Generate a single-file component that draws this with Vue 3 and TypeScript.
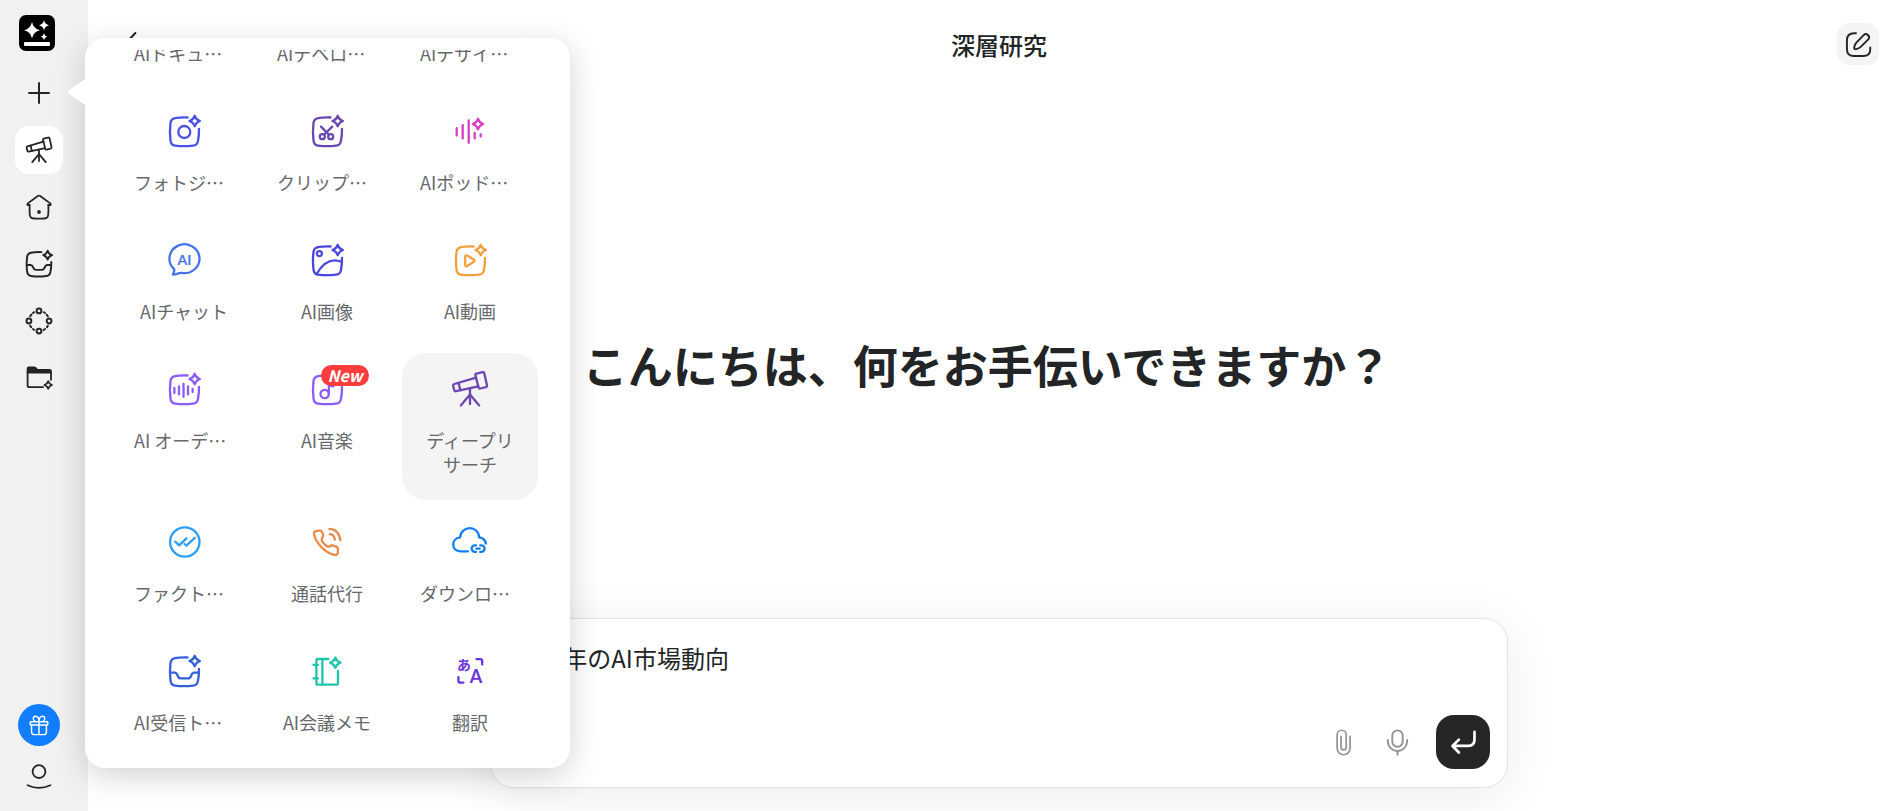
<script setup lang="ts">
import { ref } from 'vue'

interface Shape {
  d: string
  fill?: boolean
}

interface Glyph {
  text: string
  x: number
  y: number
  size: number
}

interface Tool {
  label: string
  color?: string
  shapes?: Shape[]
  glyphs?: Glyph[]
  clipped?: boolean
  badge?: string
  active?: boolean
}

const frame =
  'M21.5 4.5C17 4.4 12 4.6 9 5.2C6 5.8 4.9 7 4.5 10C3.8 16 3.8 22 4.5 27.6C4.9 30.8 6 32.2 9 32.6C15 33.4 21 33.4 27 32.6C30.2 32.2 31.6 31 32 27.8C32.8 24 33 20 33 16'

function circle(cx: number, cy: number, r: number): string {
  return `M${cx - r} ${cy}a${r} ${r} 0 1 0 ${2 * r} 0a${r} ${r} 0 1 0 ${-2 * r} 0`
}

function sparkle(cx: number, cy: number, r = 5.2): string {
  const k = r * 0.24
  return `M${cx} ${cy - r}Q${cx + k} ${cy - k} ${cx + r} ${cy}Q${cx + k} ${cy + k} ${cx} ${cy + r}Q${cx - k} ${cy + k} ${cx - r} ${cy}Q${cx - k} ${cy - k} ${cx} ${cy - r}Z`
}

function strokes(...paths: string[]): Shape[] {
  return paths.map((d) => ({ d }))
}

const corner = sparkle(28.7, 8)

const inboxShapes = strokes(
  frame,
  corner,
  'M4.2 19.7H8.6C12.6 19.7 10.6 25.4 14.6 25.4H22.2C26.2 25.4 24.2 19.7 28.2 19.7H32.6',
)

const telescopeShapes = strokes(
  'M24.4 2.6L30.6 1.1Q32 .8 32.3 2.2L35 14.2Q35.3 15.7 33.9 16.1L28.3 17.5Q26.9 17.8 26.5 16.4L23.5 4.5Q23.1 3 24.4 2.6Z',
  'M24 6.6L2.4 13Q.9 13.5 1.2 14.9L2.2 19Q2.6 20.6 4.1 20.2L26.4 15.4',
  'M6.6 12.2L8.4 19.2',
  'M18 17.4V33',
  'M18 23.6L8.8 34.4',
  'M18 23.6L27.2 34.4',
)

const tools: Tool[] = [
  { label: 'AIドキュ…', clipped: true },
  { label: 'AIデベロ…', clipped: true },
  { label: 'AIデザイ…', clipped: true },
  {
    label: 'フォトジ…',
    clipped: true,
    color: '#4b50e6',
    shapes: strokes(frame, corner, circle(18.3, 19, 6)),
  },
  {
    label: 'クリップ…',
    clipped: true,
    color: '#6b47b2',
    shapes: strokes(
      frame,
      corner,
      'M12 13.6L20 21.8',
      'M23.2 13.6L15 21.8',
      circle(13.3, 23.7, 2.5),
      circle(21.7, 23.7, 2.5),
    ),
  },
  {
    label: 'AIポッド…',
    clipped: true,
    color: '#d63fc4',
    shapes: strokes(
      'M4.7 15.2V22.6',
      'M10.7 12.2V25.4',
      'M16.7 7.4V29.8',
      'M22.7 20V25.4',
      'M28.7 21.4V23.6',
      sparkle(26, 11),
    ),
  },
  {
    label: 'AIチャット',
    color: '#4673e8',
    shapes: strokes(
      'M8.2 27.2A15 14.4 0 1 1 15.4 30.8C12.6 30.6 10.6 32.8 7 32.6C6.6 32.6 8.8 29.4 8.2 27.2Z',
    ),
    glyphs: [{ text: 'AI', x: 18.4, y: 22.6, size: 14 }],
  },
  {
    label: 'AI画像',
    color: '#4b46e0',
    shapes: strokes(frame, corner, circle(10.4, 11.7, 2.5), 'M7.6 32C13.6 21.6 21.4 15.4 32.4 19.8'),
  },
  {
    label: 'AI動画',
    color: '#f2a03d',
    shapes: strokes(frame, corner, 'M13.2 15.2Q13.2 12.4 15.6 13.8L21.6 17.4Q23.4 18.7 21.6 20L15.6 23.8Q13.2 25.2 13.2 22.4Z'),
  },
  {
    label: 'AI オーデ…',
    clipped: true,
    color: '#8c5cf6',
    shapes: strokes(
      frame,
      corner,
      'M8.4 17V22',
      'M13 15.4V23.4',
      'M17.5 13V25.8',
      'M22 15.4V23.4',
      'M26.6 18V21',
    ),
  },
  {
    label: 'AI音楽',
    color: '#8c5cf6',
    badge: 'New',
    shapes: strokes(frame, circle(15.7, 23, 4.2), 'M19.9 23V11.6Q20.4 15.4 24.4 15.4'),
  },
  { label: 'ディープリサーチ', active: true, color: '#6b47b2', shapes: telescopeShapes },
  {
    label: 'ファクト…',
    clipped: true,
    color: '#2e9ff7',
    shapes: strokes(circle(18.8, 18, 14.7), 'M9.2 17.6L13.2 21.4L20.4 14.4', 'M18.6 20L20.4 21.6L28.8 13.8'),
  },
  {
    label: '通話代行',
    color: '#e88a48',
    shapes: strokes(
      'M7 7.1C8.4 6.4 10 6.6 11.4 6.7C12.4 6.8 12.9 7.6 13.3 8.6L14.2 11.2C14.7 12.7 12.4 14 12.6 15.7C13 18.2 16.6 21.8 19 22.6C20.8 23.2 21.8 20.9 23.4 21.3L27.4 22.6C28.6 23 28.9 24 28.9 25.2V28.4C28.9 30 27.6 31.2 26 31C16 29 6.4 18.6 5 9.6C4.8 8.4 5.8 7.6 7 7.1Z',
      'M20.4 4.9C26.6 5 31 9.8 31.3 16.2',
      'M20.8 10.1C23.8 10.4 25.6 12.6 25.8 15.6',
    ),
  },
  {
    label: 'ダウンロ…',
    clipped: true,
    color: '#117ef5',
    shapes: strokes(
      'M16 27.3H8.4C-1 27.3 -1.2 14.4 8.1 13.4C9.4 .8 26.4 1.2 27.2 13.4C31 14 33.2 16.2 33.9 19.4',
      'M24 21.3H22.9A3.3 3.3 0 0 0 22.9 27.9H24',
      'M28.2 21.3H29.3A3.3 3.3 0 0 1 29.3 27.9H28.2',
      'M24.4 24.6H27.8',
    ),
  },
  { label: 'AI受信ト…', clipped: true, color: '#3661d8', shapes: inboxShapes },
  {
    label: 'AI会議メモ',
    color: '#20c4ac',
    shapes: strokes(
      'M19.4 6H8.8Q7.4 6 7.4 7.4V30.2Q7.4 31.6 8.8 31.6H27.6Q29 31.6 29 30.2V18',
      'M13.4 6V31.6',
      'M4.4 11.8H9',
      'M4.4 25.4H9',
      sparkle(26.3, 9.7),
    ),
  },
  {
    label: '翻訳',
    color: '#6a35d8',
    shapes: strokes('M24.6 6.2H28.2Q30.2 6.2 30.2 8.2V11.6', 'M6.4 24.2V27.4Q6.4 29.6 8.6 29.6H11.4'),
    glyphs: [
      { text: 'あ', x: 12, y: 17, size: 14 },
      { text: 'A', x: 24, y: 30.4, size: 18 },
    ],
  },
]

interface NavItem {
  name: string
  box: string
  width: number
  shapes: Shape[]
  active?: boolean
}

const nav: NavItem[] = [
  { name: '追加', box: '0 0 28 28', width: 2, shapes: strokes('M14 4V24', 'M4 14H24') },
  { name: 'ディープリサーチ', box: '-1 -1 38 38', width: 2.4, shapes: telescopeShapes, active: true },
  {
    name: 'ホーム',
    box: '0 0 28 28',
    width: 1.8,
    shapes: [
      { d: 'M4.6 11.8L2.6 12.2Q1.8 11.4 2.8 10.4L12.8 3Q14 2.2 15.2 3L25.2 10.4Q26.2 11.4 25.4 12.2L23.4 11.8' },
      { d: 'M4.6 11.8V19C4.6 23.6 5.4 25.3 9 25.5Q14 25.9 19 25.5C22.6 25.3 23.4 23.6 23.4 19V11.8' },
      { d: circle(14, 19, 1), fill: true },
    ],
  },
  { name: '受信トレイ', box: '2 2 33 33', width: 2.3, shapes: inboxShapes },
  {
    name: 'エージェント',
    box: '0 0 28 28',
    width: 2,
    shapes: strokes(
      circle(14, 3.9, 2.4),
      circle(24.1, 14, 2.4),
      circle(14, 24.1, 2.4),
      circle(3.9, 14, 2.4),
      'M19 5.2L20 6M21.8 7.7L22.8 9.2',
      'M22.8 18.8L22 20.2M20 22L18.6 23',
      'M9 22.8L8 22M6.2 20.2L5.2 18.8',
      'M5.2 9.2L6.4 7.6M8 6L9.2 5.2',
    ),
  },
  {
    name: 'ファイル',
    box: '0 0 28 28',
    width: 1.8,
    shapes: [
      { d: 'M2.6 8.6V4.6Q2.6 3.4 4 3.4H9.2Q10.4 3.4 11.2 4.6Q11.8 5.8 13 5.8H24.6Q26 5.8 26 7.2V8.6Z', fill: true },
      { d: 'M2.6 8V21.4Q2.6 23.2 4.4 23.2H18' },
      { d: 'M26 8V15.8' },
      { d: sparkle(23.2, 21, 3.8) },
    ],
  },
]

const prompt = ref('2025年のAI市場動向')
</script>

<template>
  <div class="shell">
    <nav class="rail">
      <svg class="logo" viewBox="0 0 36 36" aria-hidden="true">
        <rect width="36" height="36" rx="7" />
        <path
          fill="#fff"
          d="M13 7Q14.4 13.8 21 15.2Q14.4 16.6 13 23.4Q11.6 16.6 5 15.2Q11.6 13.8 13 7ZM25 5Q25.8 9.2 30 10.2Q25.8 11.2 25 15.4Q24.2 11.2 20 10.2Q24.2 9.2 25 5ZM25 18.2Q25.6 21 28.4 21.6Q25.6 22.2 25 25Q24.4 22.2 21.6 21.6Q24.4 21 25 18.2Z"
        />
        <rect x="5" y="27" width="26" height="4" rx="1" fill="#fff" />
      </svg>
      <div class="rail-items">
        <button
          v-for="item in nav"
          :key="item.name"
          type="button"
          class="rail-button"
          :class="{ active: item.active }"
          :aria-label="item.name"
        >
          <svg class="line-icon rail-icon" :viewBox="item.box" :stroke-width="item.width">
            <path v-for="(s, i) in item.shapes" :key="i" :d="s.d" :fill="s.fill ? 'currentColor' : 'none'" />
          </svg>
        </button>
      </div>
      <div class="rail-bottom">
        <button type="button" class="gift" aria-label="ギフト">
          <svg class="line-icon gift-icon" viewBox="0 0 22 24" stroke-width="1.6">
            <path d="M2 8.4H20Q20.6 8.4 20.6 9V11.4Q20.6 12 20 12H2Q1.4 12 1.4 11.4V9Q1.4 8.4 2 8.4Z" />
            <path d="M2.8 12V19.4Q2.8 22.6 6 22.6H16Q19.2 22.6 19.2 19.4V12M11 8.4V22.6" />
            <path d="M11 8C11 4.6 9.6 2.4 7.2 2.4C4 2.4 4 6.6 6.4 7.8M11 8C11 4.6 12.4 2.4 14.8 2.4C18 2.4 18 6.6 15.6 7.8" />
          </svg>
        </button>
        <button type="button" class="account" aria-label="アカウント">
          <svg class="line-icon rail-icon" viewBox="0 0 28 28" stroke-width="1.8">
            <circle cx="14" cy="9.6" r="6.4" />
            <path d="M2.6 23.2Q14 28.4 25.4 23.2" />
          </svg>
        </button>
      </div>
    </nav>

    <main class="main">
      <header class="topbar">
        <button type="button" class="back" aria-label="戻る">
          <svg class="line-icon back-icon" viewBox="0 0 24 28" stroke-width="2"><path d="M16.4 3L6 14L16.4 25" /></svg>
        </button>
        <h1 class="title">深層研究</h1>
        <button type="button" class="edit" aria-label="新規作成">
          <svg class="line-icon edit-icon" viewBox="0 0 28 28" stroke-width="2">
            <path d="M11.4 2.4H9.4Q2 2.4 2 9.8V18.6Q2 26 9.4 26H18.8Q26.2 26 26.2 18.6V17" />
            <path d="M19.6 4C21.8 1.8 26.4 4.8 24.6 8.2L16.6 16.2C14.4 18.2 11.8 19 10.2 18.8C8.8 18.4 9.8 14.2 12 11.8Z" />
          </svg>
        </button>
      </header>

      <section class="hero">
        <h2 class="greeting">こんにちは、何をお手伝いできますか？</h2>
      </section>

      <form class="composer" @submit.prevent>
        <textarea v-model="prompt" class="prompt" rows="1" aria-label="メッセージ"></textarea>
        <div class="actions">
          <button type="button" class="ghost" aria-label="添付">
            <svg class="line-icon action-icon" viewBox="0 0 28 28" stroke-width="1.8">
              <path d="M20.8 7.6V20A6.6 6.6 0 0 1 7.4 20V6A4.6 4.6 0 0 1 16.8 6V19A2.7 2.7 0 0 1 11.4 19V7.6" />
            </svg>
          </button>
          <button type="button" class="ghost" aria-label="音声入力">
            <svg class="line-icon action-icon" viewBox="0 0 28 28" stroke-width="2">
              <rect x="8.6" y="1.4" width="10.8" height="17" rx="5.4" />
              <path d="M4 11.4V12.8A10 10 0 0 0 24 12.8V11.4M14 22.8V26.8" />
            </svg>
          </button>
          <button type="submit" class="send" aria-label="送信">
            <svg class="line-icon action-icon" viewBox="0 0 28 28" stroke-width="2.8">
              <path d="M25.4 3V11Q25.4 17.6 18.8 17.6H3M9.2 11L2.6 17.6L9.2 24.4" />
            </svg>
          </button>
        </div>
      </form>
    </main>

    <aside class="popover">
      <svg class="pointer" viewBox="0 0 18 26" aria-hidden="true"><path fill="#fff" d="M18 0V26L1 14Q0 13 1 12Z" /></svg>
      <div class="scroller">
        <div class="grid">
          <button v-for="tool in tools" :key="tool.label" type="button" class="tile" :class="{ active: tool.active }">
            <svg class="line-icon tile-icon" viewBox="0 0 36 36" stroke-width="2.3" :color="tool.color">
              <path v-for="(s, i) in tool.shapes" :key="i" :d="s.d" />
              <text
                v-for="g in tool.glyphs"
                :key="g.text"
                class="glyph"
                :x="g.x"
                :y="g.y"
                :font-size="g.size"
                text-anchor="middle"
              >{{ g.text }}</text>
            </svg>
            <span v-if="tool.badge" class="badge">{{ tool.badge }}</span>
            <span class="label" :class="{ clipped: tool.clipped }">{{ tool.label }}</span>
          </button>
        </div>
      </div>
    </aside>
  </div>
</template>

<style>
html,
body {
  margin: 0;
}
</style>

<style scoped>
.shell {
  position: relative;
  display: flex;
  height: 100vh;
  overflow: hidden;
  background: #fff;
  color: #222426;
  font-family: 'Noto Sans CJK JP', 'Noto Sans', sans-serif;
}

button {
  margin: 0;
  padding: 0;
  border: 0;
  background: none;
  color: inherit;
  font: inherit;
  cursor: pointer;
}

.line-icon {
  display: block;
  fill: none;
  stroke: currentColor;
  stroke-linecap: round;
  stroke-linejoin: round;
  overflow: visible;
}

.rail {
  box-sizing: border-box;
  flex: none;
  display: flex;
  flex-direction: column;
  align-items: flex-start;
  width: 88px;
  padding: 15px;
  background: #f1f1f1;
}

.logo {
  display: block;
  width: 36px;
  height: 36px;
  margin: 0 4px;
}

.rail-items {
  display: flex;
  flex-direction: column;
  gap: 9px;
  margin-top: 18px;
}

.rail-button {
  display: grid;
  place-items: center;
  width: 48px;
  height: 48px;
  border-radius: 14px;
}

.rail-button.active {
  background: #fff;
}

.rail-icon {
  width: 28px;
  height: 28px;
}

.rail-bottom {
  display: flex;
  flex-direction: column;
  align-items: center;
  gap: 16px;
  width: 48px;
  margin-top: auto;
  padding-bottom: 6px;
}

.gift {
  display: grid;
  place-items: center;
  width: 42px;
  height: 42px;
  border-radius: 50%;
  background: #117dff;
  color: #fff;
}

.gift-icon {
  width: 20px;
  height: 22px;
}

.main {
  flex: 1;
  display: flex;
  flex-direction: column;
  align-items: center;
  min-width: 0;
  padding: 0 0 23px 7px;
}

.topbar {
  box-sizing: border-box;
  display: grid;
  grid-template-columns: 42px 1fr 42px;
  align-items: center;
  width: 100%;
  height: 88px;
  padding: 0 24px;
}

.back-icon {
  width: 24px;
  height: 28px;
}

.title {
  margin: 0;
  padding-top: 2px;
  font-size: 24px;
  line-height: 36px;
  font-weight: 500;
  text-align: center;
}

.edit {
  display: grid;
  place-items: center;
  width: 42px;
  height: 42px;
  border-radius: 12px;
  background: #f4f4f4;
}

.edit-icon {
  width: 27px;
  height: 27px;
}

.hero {
  flex: 1;
  display: flex;
  align-items: center;
  padding: 24px 24px 0 0;
}

.greeting {
  margin: 0;
  font-size: 45px;
  line-height: 64px;
  font-weight: 700;
  white-space: nowrap;
}

.composer {
  box-sizing: border-box;
  display: flex;
  flex-direction: column;
  justify-content: space-between;
  width: 100%;
  max-width: 1018px;
  height: 170px;
  padding: 19px 17px 18px 19px;
  border: 1px solid #e4e4e4;
  border-radius: 24px;
  background: #fff;
  box-shadow: 0 8px 50px rgba(0, 0, 0, 0.08);
}

.prompt {
  display: block;
  box-sizing: border-box;
  width: 100%;
  height: 40px;
  padding: 0;
  border: 0;
  outline: 0;
  background: none;
  color: inherit;
  font: inherit;
  font-size: 24px;
  line-height: 40px;
  resize: none;
  overflow: hidden;
}

.actions {
  display: flex;
  align-items: center;
  justify-content: flex-end;
}

.ghost {
  display: grid;
  place-items: center;
  width: 54px;
  height: 54px;
  color: #929598;
}

.send {
  display: grid;
  place-items: center;
  width: 54px;
  height: 54px;
  margin-left: 12px;
  border-radius: 18px;
  background: #262626;
  color: #fff;
}

.action-icon {
  width: 27px;
  height: 27px;
}

.popover {
  position: absolute;
  top: 38px;
  bottom: 43px;
  left: 85px;
  box-sizing: border-box;
  width: 485px;
  padding: 12px 32px 10px 31px;
  border-radius: 20px;
  background: #fff;
  box-shadow: 0 8px 32px rgba(0, 0, 0, 0.18);
}

.pointer {
  position: absolute;
  top: 41px;
  left: -18px;
  width: 18px;
  height: 26px;
}

.scroller {
  display: flex;
  align-items: flex-end;
  height: 100%;
  overflow: hidden;
}

.grid {
  flex: 1;
  display: grid;
  grid-template-columns: repeat(3, 1fr);
  gap: 6px 7px;
}

.tile {
  position: relative;
  display: flex;
  flex-direction: column;
  align-items: center;
  gap: 21px;
  padding: 18px 18px 24px;
  border-radius: 24px;
  color: #66686b;
}

.tile.active {
  background: #f4f4f4;
}

.tile-icon {
  flex: none;
  width: 36px;
  height: 36px;
}

.glyph {
  fill: currentColor;
  stroke: none;
  font-family: Lato, 'Noto Sans CJK JP', sans-serif;
  font-weight: 700;
}

.label {
  width: 100%;
  font-size: 18px;
  line-height: 24px;
  text-align: center;
}

.label.clipped {
  text-align: left;
  white-space: nowrap;
}

.badge {
  position: absolute;
  top: 12px;
  left: 62px;
  width: 48px;
  border-radius: 11px;
  background: #ff3d3d;
  color: #fff;
  font-size: 16px;
  line-height: 21px;
  font-weight: 700;
  font-style: italic;
  text-align: center;
}
</style>
